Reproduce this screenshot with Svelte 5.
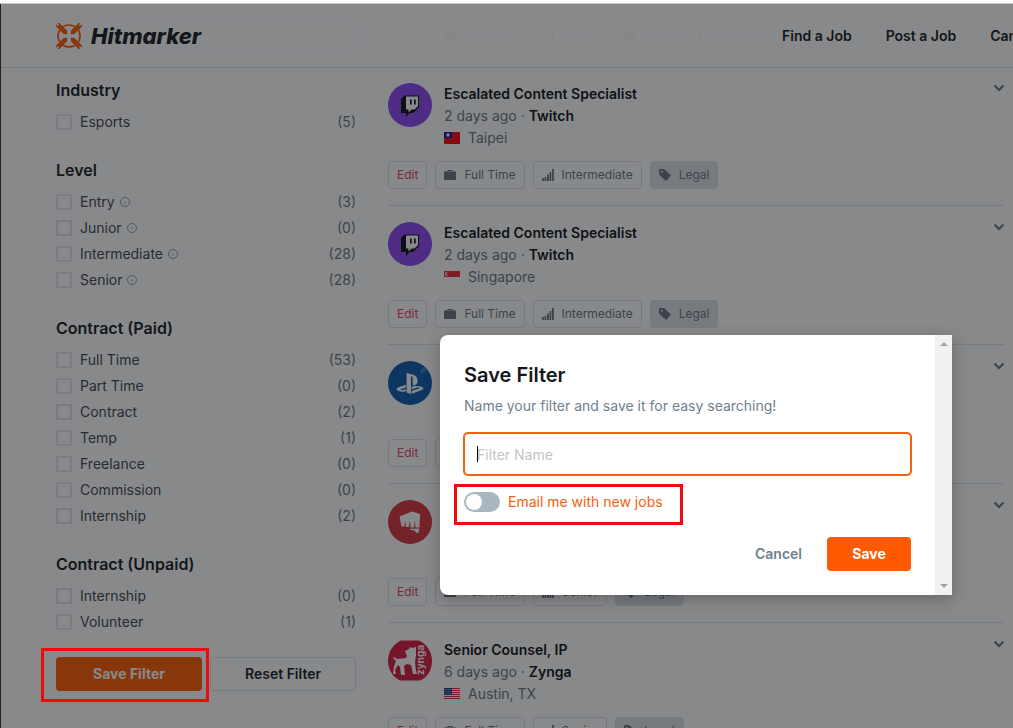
<script>
    let email = $state(false);
    let filterName = $state("");

    const groups = [
        { title: "Industry", items: [{ name: "Esports", count: 5 }] },
        {
            title: "Level",
            items: [
                { name: "Entry", count: 3, info: true },
                { name: "Junior", count: 0, info: true },
                { name: "Intermediate", count: 28, info: true },
                { name: "Senior", count: 28, info: true },
            ],
        },
        {
            title: "Contract (Paid)",
            items: [
                { name: "Full Time", count: 53 },
                { name: "Part Time", count: 0 },
                { name: "Contract", count: 2 },
                { name: "Temp", count: 1 },
                { name: "Freelance", count: 0 },
                { name: "Commission", count: 0 },
                { name: "Internship", count: 2 },
            ],
        },
        {
            title: "Contract (Unpaid)",
            items: [
                { name: "Internship", count: 0 },
                { name: "Volunteer", count: 1 },
            ],
        },
    ];

    const jobs = [
        { level: "Senior", sector: "Business Development" },
        {
            title: "Escalated Content Specialist",
            age: "2 days ago",
            company: "Twitch",
            logo: "twitch",
            flag: "tw",
            place: "Taipei",
            level: "Intermediate",
            sector: "Legal",
        },
        {
            title: "Escalated Content Specialist",
            age: "2 days ago",
            company: "Twitch",
            logo: "twitch",
            flag: "sg",
            place: "Singapore",
            level: "Intermediate",
            sector: "Legal",
        },
        { logo: "playstation", level: "Senior", sector: "Legal" },
        { logo: "riot", level: "Senior", sector: "Legal" },
        {
            title: "Senior Counsel, IP",
            age: "6 days ago",
            company: "Zynga",
            logo: "zynga",
            flag: "us",
            place: "Austin, TX",
            level: "Senior",
            sector: "Legal",
        },
    ];
</script>

{#snippet logo(name)}
    <svg class="logo" viewBox="0 0 44 44" aria-hidden="true">
        {#if name === "twitch"}
            <circle cx="22" cy="22" r="22" fill="#8a42f0" />
            <path d="M16.500 12.500h14.500V24l-6 6h-3.500L18 34v-4h-5V16z" fill="#0b0b10" />
            <path d="M18 13.500h12v9.500l-3.500 3.500h-3l-3 3v-3H18z" fill="#fff" />
            <path d="M22 16.500h1.700v5H22zM26 16.500h1.700v5H26z" fill="#0b0b10" />
        {:else if name === "playstation"}
            <circle cx="22" cy="22" r="22" fill="#0a58ac" />
            <path d="M32 10l4-4 3 3-6 4z" fill="#2d7ecb" />
            <g transform="translate(8.500 9) scale(1.120)" fill="#fff">
                <path d="M8.984 2.596v17.547l3.915 1.261V6.688c0-.69.304-1.151.794-.991.636.18.76.814.76 1.505v5.875c2.441 1.193 4.362-.002 4.362-3.152 0-3.237-1.126-4.675-4.438-5.827-1.307-.448-3.728-1.186-5.391-1.502zm4.656 16.241l6.296-2.275c.715-.258.826-.625.246-.818-.586-.192-1.637-.139-2.357.123l-4.205 1.500V14.980l.24-.085s1.201-.42 2.913-.615c1.696-.18 3.785.03 5.437.661 1.848.601 2.040 1.472 1.576 2.072-.465.6-1.622 1.036-1.622 1.036l-8.544 3.107V18.860zM1.807 18.600c-1.900-.545-2.214-1.668-1.352-2.320.801-.586 2.160-1.052 2.160-1.052l5.615-2.013v2.313L4.205 17c-.705.271-.825.632-.239.826.586.195 1.637.15 2.343-.12L8.247 17v2.074c-.12.03-.256.044-.39.073-1.939.331-3.996.196-6.038-.479z" />
            </g>
        {:else if name === "riot"}
            <circle cx="22" cy="22" r="22" fill="#d6323b" />
            <path d="M11.500 16.500L24 11.500l8 2.500-.5 13.500h-4L27 20l-1 7.500h-3.500L22 20l-1.200 7h-3l-.6-6.500-1 6h-2.700z" fill="#fff" />
            <path d="M22 28.800l9.300-.3-.5 4-2.500.5-1.500-2.500-4.300-.5z" fill="#fff" />
        {:else if name === "zynga"}
            <path d="M13 1.500h18C39 5 44 13 44 22s-5 17-12 19.500H12C5 38 0 31 0 22S5 5 13 1.500z" fill="#d8163c" />
            <path d="M17 12l4-2 1-2 2 1 4-1v8l-1 7 1 9 1 3h-4l-2-9-4-1-3 2 1 9h-4l-1-8-2-2-3 5 1 4H5l1-8 2-5-3-3 1-1 3 2 9-1 1-2z" fill="#fff" />
            <text x="-36" y="36" transform="rotate(-90)" fill="#fff" font-size="10" font-weight="700">zynga</text>
        {/if}
    </svg>
{/snippet}

{#snippet flag(code)}
    <svg class="flag" viewBox="0 0 16 12" aria-hidden="true">
        {#if code === "tw"}
            <path d="M0 0h16v12H0z" fill="#f5030f" />
            <path d="M0 0h8v6H0z" fill="#00149a" />
            <circle cx="4" cy="3" r="1.700" fill="#fff" />
        {:else if code === "sg"}
            <path d="M0 0h16v12H0z" fill="#fff" />
            <path d="M0 0h16v6H0z" fill="#ee2536" />
            <circle cx="3" cy="3" r="2" fill="#fff" />
            <circle cx="4" cy="3" r="1.800" fill="#ee2536" />
        {:else}
            <path d="M0 0h16v12H0z" fill="#fff" />
            <path d="M0 .5h16M0 2.500h16M0 4.500h16M0 6.500h16M0 8.500h16M0 10.500h16" stroke="#d8203a" />
            <path d="M0 0h8v7H0z" fill="#27407f" />
            <path d="M1 1.500h6M1 3.500h6M1 5.500h6" stroke="#fff" stroke-width=".6" stroke-dasharray=".7 1" />
        {/if}
    </svg>
{/snippet}

<div class="screen">
    <div class="strip"></div>
    <div class="frame">
        <header>
            <a class="brand" href="/">
                <svg viewBox="0 0 26 26" aria-hidden="true">
                    <circle cx="13" cy="13" r="11" fill="none" stroke="#ff5a00" stroke-width="1.700" />
                    <path d="M2.500 2.500l7 7M23.500 2.500l-7 7M2.500 23.500l7-7M23.500 23.500l-7-7" stroke="#ff5a00" stroke-width="4.800" stroke-linecap="round" />
                    <path d="M0 0l2.500 2.500M26 0l-2.500 2.500M0 26l2.500-2.500M26 26l-2.500-2.500" stroke="#fff" stroke-width="1.400" />
                    <path d="M13 6v14M6 13h14" stroke="#fff" stroke-width="3.600" />
                </svg>
                <span>Hitmarker</span>
            </a>
            <nav>
                <a href="/jobs">Find a Job</a>
                <a href="/post">Post a Job</a>
                <a href="/candidates">Candidates</a>
            </nav>
        </header>

        <div class="content">
            <aside>
                <input class="search" type="text" aria-label="Search" />
                {#each groups as group}
                    <section>
                        <h2>{group.title}</h2>
                        {#each group.items as item}
                            <label>
                                <input type="checkbox" />
                                <span>{item.name}</span>
                                {#if item.info}
                                    <svg class="info" viewBox="0 0 10 10" aria-hidden="true">
                                        <circle cx="5" cy="5" r="4.500" fill="none" stroke="#8f9aa4" />
                                        <path d="M4.500 4.500h1V6.500h-1z" fill="#8f9aa4" />
                                    </svg>
                                {/if}
                                <span class="count">({item.count})</span>
                            </label>
                        {/each}
                    </section>
                {/each}
                <div class="actions">
                    <div class="marked marked-save">
                        <button class="primary">Save Filter</button>
                    </div>
                    <button class="secondary">Reset Filter</button>
                </div>
            </aside>

            <main>
                {#each jobs as job}
                    <article>
                        <div class="summary">
                            {@render logo(job.logo)}
                            <div class="details">
                                {#if job.title}
                                    <h3>{job.title}</h3>
                                    <p>{job.age} · <b>{job.company}</b></p>
                                    <p class="place">{@render flag(job.flag)}{job.place}</p>
                                {/if}
                            </div>
                            <button class="expand" aria-label="Expand">
                                <svg viewBox="0 0 10 10" aria-hidden="true">
                                    <path d="M.5 2.500L5 7l4.500-4.500" fill="none" stroke="#66737f" stroke-width="2" />
                                </svg>
                            </button>
                        </div>
                        <div class="tags">
                            <a class="tag edit" href="/edit">Edit</a>
                            <span class="tag">
                                <svg viewBox="0 0 12 12" aria-hidden="true">
                                    <path fill-rule="evenodd" d="M3.500 2.500V1h5v1.500H12V11H0V2.500zM4.500 2v.5h3V2z" />
                                </svg>
                                Full Time
                            </span>
                            <span class="tag">
                                <svg viewBox="0 0 12 12" aria-hidden="true">
                                    <path d="M0 9h1.800v3H0zM2.500 8h1.800v4H2.500zM5 5.500h1.800V12H5zM7.500 3h1.800v9H7.500zM10 0h1.800v12H10z" />
                                </svg>
                                {job.level}
                            </span>
                            <span class="tag sector">
                                <svg viewBox="0 0 12 12" aria-hidden="true">
                                    <path fill-rule="evenodd" d="M0 1.200Q0 0 1.200 0H5l7 6.500L7 12 0 5.500zM2.800 1.700a1 1 0 1 0 .01 2 1 1 0 0 0 0-2z" />
                                </svg>
                                {job.sector}
                            </span>
                        </div>
                    </article>
                {/each}
            </main>
        </div>

        <div class="overlay">
            <div class="modal" role="dialog" aria-labelledby="modal-title">
                <form>
                    <h1 id="modal-title">Save Filter</h1>
                    <p>Name your filter and save it for easy searching!</p>
                    <div class="field">
                        <input type="text" placeholder="Filter Name" aria-label="Filter Name" bind:value={filterName} />
                        <span class="caret"></span>
                    </div>
                    <div class="marked marked-email">
                        <label class="toggle">
                            <input type="checkbox" bind:checked={email} />
                            Email me with new jobs
                        </label>
                    </div>
                    <div class="buttons">
                        <button type="button" class="cancel">Cancel</button>
                        <button type="button" class="primary">Save</button>
                    </div>
                </form>
                <div class="scrollbar" aria-hidden="true">
                    <svg viewBox="0 0 8 4"><path d="M0 4l4-4 4 4z" fill="#a3a3a3" /></svg>
                    <svg viewBox="0 0 8 4"><path d="M0 0l4 4 4-4z" fill="#a3a3a3" /></svg>
                </div>
            </div>
        </div>
    </div>
</div>

<style>
    .screen {
        display: flex;
        flex-direction: column;
        height: 100vh;
        overflow: hidden;
        font-family: Inter, "Liberation Sans", sans-serif;
        font-size: 14px;
        line-height: 22px;
        color: #14181c;
    }

    .screen * {
        box-sizing: border-box;
    }

    button,
    input {
        font: inherit;
    }

    h1,
    h2,
    h3,
    p {
        margin: 0;
    }

    a {
        color: inherit;
        text-decoration: none;
    }

    .strip {
        height: 4px;
        flex: none;
        background: #fff;
        border-bottom: 1px solid #c9cacb;
    }

    .frame {
        position: relative;
        flex: 1;
        min-height: 0;
        overflow: hidden;
        border-left: 1px solid #222;
        background: #fff;
    }

    header {
        position: absolute;
        z-index: 2;
        top: 0;
        left: 0;
        right: 0;
        height: 64px;
        display: flex;
        align-items: center;
        justify-content: space-between;
        padding-left: 55px;
        background: rgba(255, 255, 255, 0.95);
        border-bottom: 1px solid #dde1e5;
    }

    .brand {
        display: flex;
        align-items: center;
        gap: 9px;
        font-size: 22px;
        font-weight: 800;
        font-style: italic;
    }

    .brand svg {
        width: 26px;
        height: 26px;
    }

    nav {
        display: flex;
        gap: 34px;
        flex: 0 0 231px;
        overflow: hidden;
        white-space: nowrap;
        font-weight: 600;
    }

    .content {
        display: flex;
        gap: 32px;
        margin-top: -76px;
        padding: 0 9px 0 55px;
    }

    aside {
        flex: 0 0 300px;
        padding-top: 90px;
    }

    .search {
        display: block;
        width: 100%;
        height: 34px;
        margin-bottom: 25px;
        border: 1px solid #d3d8dd;
        border-radius: 4px;
        background: #fff;
    }

    section {
        margin-bottom: 22px;
    }

    h2 {
        margin-bottom: 6px;
        font-size: 16px;
        line-height: 26px;
        font-weight: 600;
    }

    aside label {
        display: flex;
        align-items: center;
        height: 26px;
        color: #3c444d;
    }

    aside label input {
        appearance: none;
        width: 16px;
        height: 16px;
        margin: 0 8px 0 0;
        border: 2px solid #e4e6e8;
    }

    .info {
        width: 10px;
        height: 10px;
        margin-left: 5px;
    }

    .count {
        margin-left: auto;
        color: #6a7580;
    }

    .actions {
        display: grid;
        grid-template-columns: 1fr 1fr;
        gap: 8px;
    }

    .actions button {
        width: 100%;
        height: 34px;
    }

    .primary {
        border: 0;
        border-radius: 4px;
        background: #ff5a00;
        color: #fff;
        font-weight: 700;
    }

    .secondary {
        border: 1px solid #dde1e5;
        border-radius: 4px;
        background: none;
        color: #14181c;
        font-weight: 600;
    }

    /* red highlight boxes, kept above the dimmed page */
    .marked {
        position: relative;
    }

    .marked::after {
        content: "";
        position: absolute;
        z-index: 10;
        border: 3px solid #ec0c0c;
        pointer-events: none;
    }

    .marked-save::after {
        inset: -9px -7px -11px -15px;
    }

    .marked-email::after {
        inset: -7px -20px -12px -10px;
    }

    main {
        flex: 1;
        min-width: 0;
    }

    article {
        padding: 16px 0;
        border-bottom: 1px solid #dde1e5;
    }

    .summary {
        display: flex;
        align-items: flex-start;
        gap: 12px;
        margin-bottom: 12px;
    }

    .logo {
        width: 44px;
        height: 44px;
    }

    .details {
        flex: 1;
        height: 66px;
        color: #66737f;
    }

    h3 {
        font-size: 14px;
        line-height: 22px;
        font-weight: 600;
        color: #0c0f12;
    }

    b {
        font-weight: 600;
        color: #0c0f12;
    }

    .place {
        display: flex;
        align-items: center;
        gap: 8px;
    }

    .flag {
        width: 16px;
        height: 12px;
        border-radius: 1px;
    }

    .expand {
        display: flex;
        padding: 0;
        border: 0;
        background: none;
    }

    .expand svg {
        width: 10px;
        height: 10px;
    }

    .tags {
        display: flex;
        gap: 8px;
    }

    .tag {
        display: flex;
        align-items: center;
        gap: 8px;
        height: 28px;
        padding: 0 8px;
        border: 1px solid #dbe0e5;
        border-radius: 4px;
        font-size: 12px;
        color: #66737f;
    }

    .tag svg {
        width: 12px;
        height: 12px;
        fill: #66737f;
    }

    .edit {
        color: #e0405f;
    }

    .sector {
        background: #dce2e9;
        border-color: #dce2e9;
    }

    .overlay {
        position: absolute;
        z-index: 5;
        inset: 0;
        display: flex;
        align-items: flex-start;
        justify-content: flex-end;
        padding: 331px 61px 0 0;
        background: rgba(17, 20, 24, 0.5);
    }

    .modal {
        display: flex;
        width: 512px;
        background: #fff;
        border-radius: 8px 0 0 8px;
        box-shadow: 0 4px 16px rgba(0, 0, 0, 0.25);
    }

    form {
        flex: 1;
        padding: 24px;
    }

    h1 {
        margin-bottom: 4px;
        font-size: 20px;
        line-height: 32px;
        font-weight: 600;
    }

    form p {
        margin-bottom: 16px;
        color: #6f7f8d;
    }

    .field {
        position: relative;
        margin-bottom: 16px;
    }

    .field input {
        display: block;
        width: 100%;
        height: 42px;
        padding: 0 12px;
        border: 1px solid #f26112;
        border-radius: 4px;
        box-shadow: 0 0 0 1px #f26112;
        outline: 0;
    }

    .field input::placeholder {
        color: #c3c5c8;
        opacity: 1;
    }

    .caret {
        position: absolute;
        top: 13px;
        left: 13px;
        width: 1px;
        height: 16px;
        background: #000;
    }

    .marked-email {
        width: fit-content;
        margin-bottom: 24px;
    }

    .toggle {
        display: flex;
        align-items: center;
        gap: 8px;
        color: #f26112;
    }

    .toggle input {
        appearance: none;
        display: flex;
        width: 36px;
        height: 20px;
        margin: 0;
        padding: 2px;
        border-radius: 10px;
        background: #a9b7c0;
    }

    .toggle input::before {
        content: "";
        width: 16px;
        height: 16px;
        border-radius: 50%;
        background: #fff;
    }

    .toggle input:checked {
        justify-content: flex-end;
        background: #ff5a00;
    }

    .buttons {
        display: flex;
        justify-content: flex-end;
        gap: 25px;
    }

    .buttons .primary {
        width: 84px;
        height: 34px;
    }

    .cancel {
        padding: 0;
        border: 0;
        background: none;
        color: #6f7f8d;
        font-weight: 600;
    }

    .scrollbar {
        display: flex;
        flex-direction: column;
        align-items: center;
        justify-content: space-between;
        width: 17px;
        padding: 7px 0;
        background: #f1f1f1;
    }

    .scrollbar svg {
        width: 8px;
        height: 4px;
    }
</style>
